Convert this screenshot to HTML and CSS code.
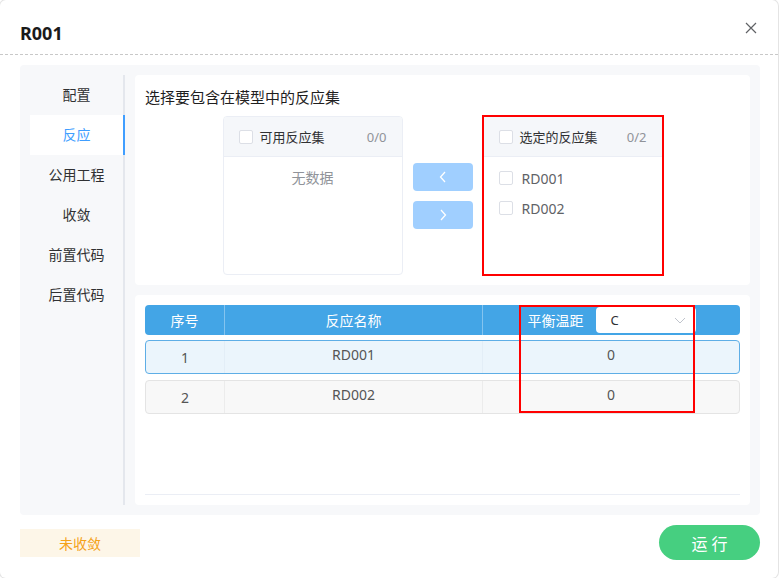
FILE: index.html
```html
<!DOCTYPE html>
<html lang="zh">
<head>
<meta charset="utf-8">
<title>R001</title>
<link rel="stylesheet" href="styles.css">
</head>
<body>
<div class="dialog">
  <div class="dlg-head">
    <div class="dlg-title">R001</div>
    <svg class="close" width="12" height="12" viewBox="0 0 12 12"><path d="M1 1L11 11M11 1L1 11" stroke="#606266" stroke-width="1.2" fill="none"/></svg>
  </div>
  <div class="dlg-body">
    <div class="panel">
      <div class="nav">
        <div class="nav-item">配置</div>
        <div class="nav-item active">反应</div>
        <div class="nav-item">公用工程</div>
        <div class="nav-item">收敛</div>
        <div class="nav-item">前置代码</div>
        <div class="nav-item">后置代码</div>
      </div>
      <div class="main">
        <div class="card card-top">
          <div class="card-title">选择要包含在模型中的反应集</div>
          <div class="transfer">
            <div class="tpanel">
              <div class="thead"><span class="cb"></span><span class="tlabel">可用反应集</span><span class="tcount">0/0</span></div>
              <div class="tbody"><div class="empty">无数据</div></div>
            </div>
            <div class="tbtns">
              <div class="tbtn"><svg width="8" height="12" viewBox="0 0 8 12"><path d="M6 1L1.5 6L6 11" stroke="#fff" stroke-width="1.3" fill="none"/></svg></div>
              <div class="tbtn"><svg width="8" height="12" viewBox="0 0 8 12"><path d="M2 1L6.5 6L2 11" stroke="#fff" stroke-width="1.3" fill="none"/></svg></div>
            </div>
            <div class="tpanel marked">
              <div class="thead"><span class="cb"></span><span class="tlabel">选定的反应集</span><span class="tcount">0/2</span></div>
              <div class="tbody list">
                <div class="titem"><span class="cb"></span><span>RD001</span></div>
                <div class="titem"><span class="cb"></span><span>RD002</span></div>
              </div>
            </div>
          </div>
        </div>
        <div class="card card-bottom">
          <div class="table">
            <div class="tr th">
              <div class="c c1">序号</div>
              <div class="c c2">反应名称</div>
              <div class="c c3"><span>平衡温距</span><div class="select"><span>C</span><svg width="12" height="7" viewBox="0 0 12 7"><path d="M1 1L6 6L11 1" stroke="#c0c4cc" stroke-width="1" fill="none"/></svg></div></div>
            </div>
            <div class="tr row sel">
              <div class="c c1">1</div>
              <div class="c c2 up">RD001</div>
              <div class="c c3 up">0</div>
            </div>
            <div class="tr row">
              <div class="c c1">2</div>
              <div class="c c2 up">RD002</div>
              <div class="c c3 up">0</div>
            </div>
          </div>
          <div class="mark2"></div>
        </div>
      </div>
    </div>
  </div>
  <div class="dlg-foot">
    <div class="badge">未收敛</div>
    <div class="run">运行</div>
  </div>
</div>
</body>
</html>
```
FILE: styles.css
```css
* { box-sizing: border-box; }
html, body { margin: 0; padding: 0; background: #fff; }
body { font-family: "Noto Sans", "Noto Sans CJK SC", sans-serif; color: #303133; }
.dialog {
  width: 778px; height: 578px; background: #fff;
  border-radius: 6px; box-shadow: 0 0 0 1px #e4e4e4;
  display: flex; flex-direction: column;
}
.dlg-head {
  height: 55px; border-bottom: 1px dashed #c8c8c8;
  display: flex; align-items: flex-start; justify-content: space-between;
  padding: 20px 21px 0 20px;
}
.dlg-title { font-size: 18px; font-weight: 700; line-height: 26px; color: #1a1a1a; }
.close { margin-top: 2px; }
.dlg-body { padding: 10px 18px 0 20px; }
.panel {
  height: 450px; background: #f7f8fa; border-radius: 4px;
  padding: 10px; display: flex; gap: 10px;
}
.nav { width: 95px; border-right: 2px solid #e4e7ed; display: flex; flex-direction: column; }
.nav-item { height: 40px; line-height: 40px; text-align: center; font-size: 14px; color: #303133; }
.nav-item.active { background: #fff; color: #409eff; margin-right: -2px; border-right: 2px solid #409eff; }
.main { flex: 1; display: flex; flex-direction: column; gap: 10px; }
.card { background: #fff; border-radius: 4px; height: 210px; padding: 10px; }
.card-title { font-size: 15px; line-height: 24px; color: #1f1f1f; }
.transfer { display: flex; justify-content: center; align-items: center; margin-top: 7px; gap: 10px; }
.tpanel { width: 180px; height: 159px; border: 1px solid #ebeef5; border-radius: 4px; overflow: hidden; }
.tpanel.marked { outline: 2px solid #f00; outline-offset: -1px; border-radius: 0; }
.thead { height: 40px; background: #f5f7fa; border-bottom: 1px solid #ebeef5; display: flex; align-items: center; padding: 0 15px; font-size: 13px; }
.cb { width: 14px; height: 14px; border: 1px solid #dcdfe6; border-radius: 2px; background: #fff; flex: none; }
.tlabel { margin-left: 7px; flex: 1; color: #303133; }
.tcount { color: #909399; font-size: 13px; }
.tbody { padding-top: 6px; }
.empty { text-align: center; color: #909399; font-size: 14px; line-height: 30px; }
.titem { display: flex; align-items: center; height: 30px; padding-left: 15px; font-size: 14px; color: #606266; }
.titem span:last-child { margin-left: 9px; }
.tbtns { display: flex; flex-direction: column; gap: 10px; }
.tbtn { width: 60px; height: 28px; background: #a0cfff; border-radius: 4px; display: flex; align-items: center; justify-content: center; }
.card-bottom { position: relative; }
.table { height: 190px; border-bottom: 1px solid #ebeef5; }
.tr { display: flex; height: 30px; }
.th { background: #43a5e6; border-radius: 4px; color: #fff; font-size: 14px; }
.c { display: flex; align-items: center; justify-content: center; }
.c1 { width: 79px; }
.c2 { width: 258px; border-left: 1px solid rgba(255,255,255,0.35); }
.c3 { flex: 1; border-left: 1px solid rgba(255,255,255,0.35); gap: 12px; }
.select { width: 100px; height: 26px; background: #fff; border-radius: 4px; display: flex; align-items: center; justify-content: space-between; padding: 0 10px 0 15px; color: #303133; font-size: 13px; }
.row { height: 34px; margin-top: 6px; border-radius: 4px; border: 1px solid #e4e4e4; background: #f8f8f8; font-size: 14px; color: #555; }
.row.sel { margin-top: 5px; background: #ebf5fc; border-color: #5eaee6; }
.row .c2, .row .c3 { border-left: 1px solid #ececec; }
.row.sel .c2, .row.sel .c3 { border-left-color: #e3eef7; }
.row .c1 { width: 78px; }
.up { padding-bottom: 6px; }
.mark2 { position: absolute; left: 384px; top: 10px; width: 176px; height: 108px; border: 2px solid #f00; }
.dlg-foot { flex: 1; display: flex; align-items: center; justify-content: space-between; padding: 0 18px 8px 20px; }
.badge { width: 120px; height: 28px; background: #fdf6e8; color: #f5a31a; font-size: 14px; display: flex; align-items: center; justify-content: center; }
.run { width: 101px; height: 35px; border-radius: 18px; background: #46cf80; color: #fff; font-size: 16px; letter-spacing: 4px; display: flex; align-items: center; justify-content: center; padding-left: 4px; }
```
